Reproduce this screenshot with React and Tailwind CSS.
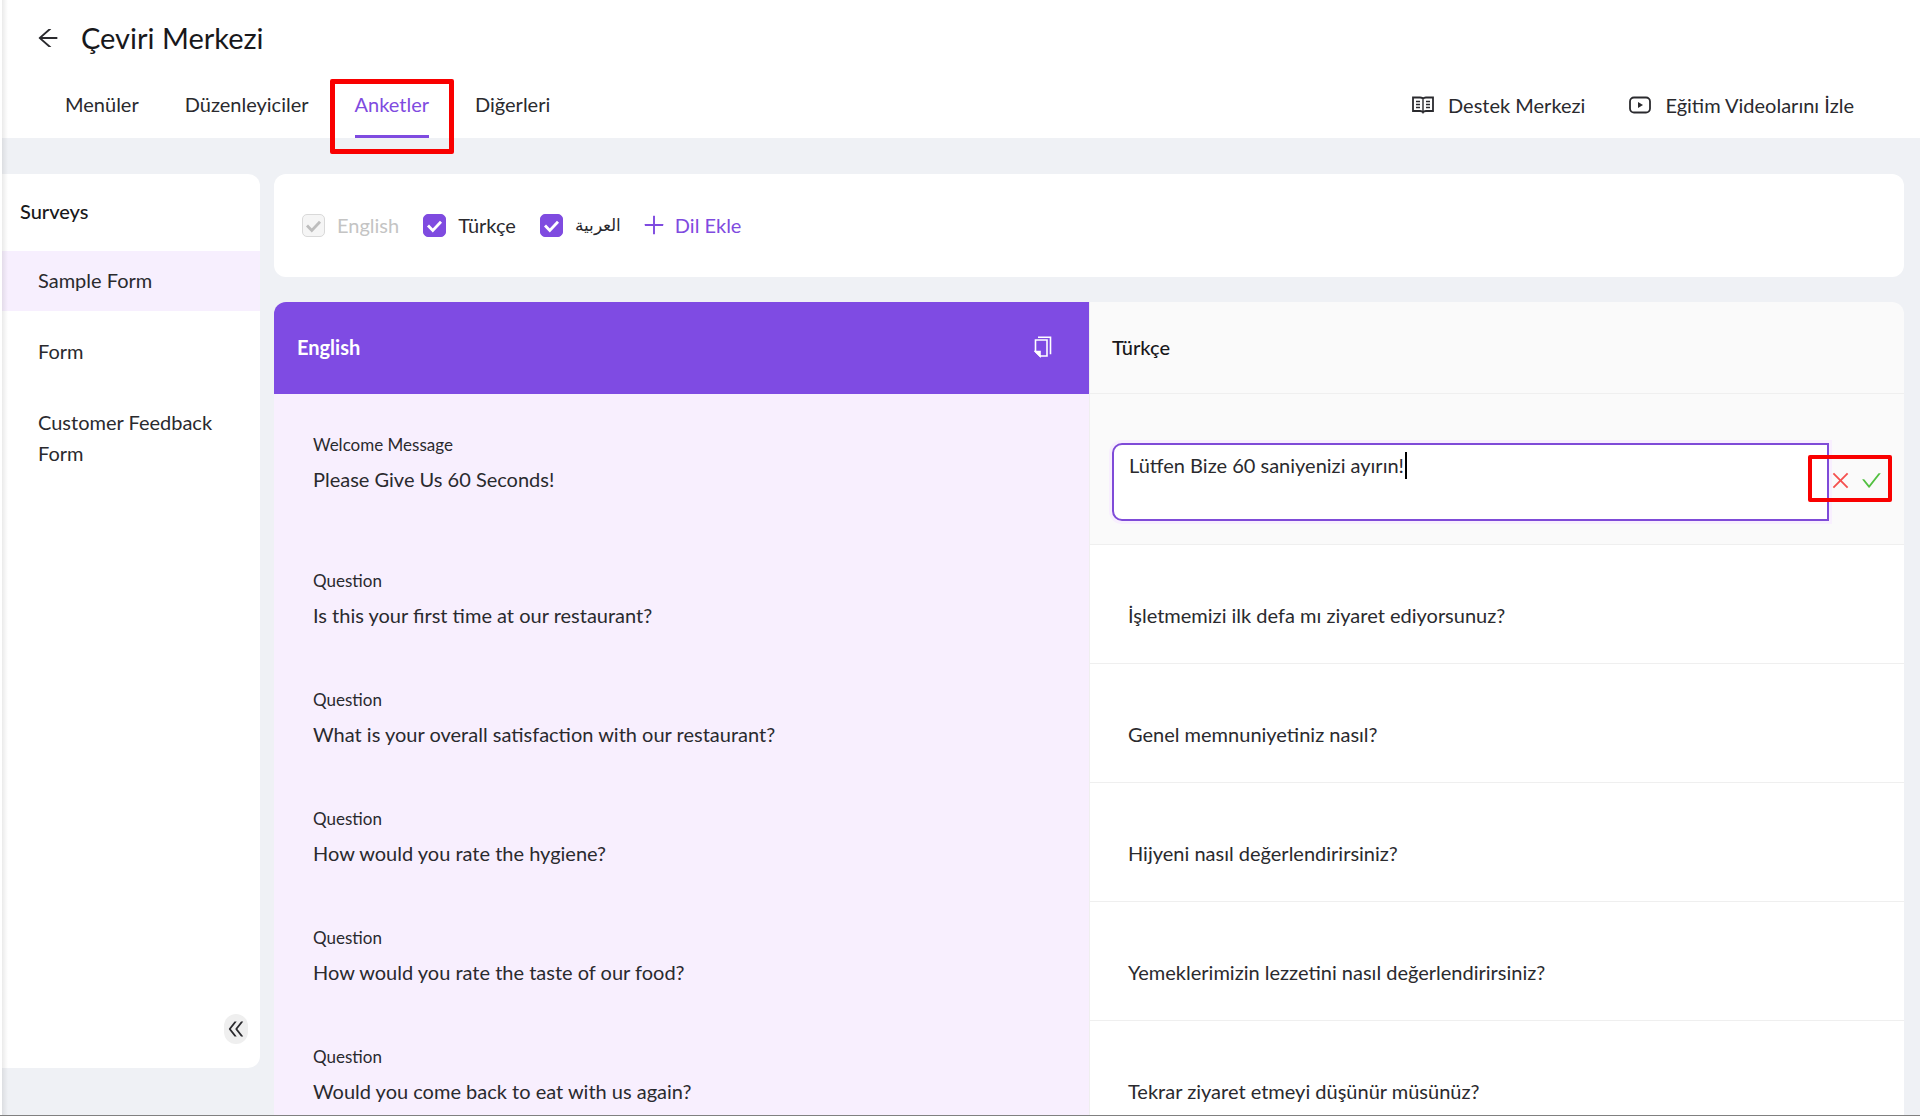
import React, { useState } from 'react';
import {
    AiOutlineArrowLeft,
    AiOutlineCheck,
    AiOutlineClose,
    AiOutlineDoubleLeft,
    AiOutlinePlus
} from 'react-icons/ai';

const TABS = ['Menüler', 'Düzenleyiciler', 'Anketler', 'Diğerleri'];

const SURVEYS = ['Sample Form', 'Form', 'Customer Feedback Form'];

const QUESTIONS = [
    { en: 'Is this your first time at our restaurant?', tr: 'İşletmemizi ilk defa mı ziyaret ediyorsunuz?' },
    { en: 'What is your overall satisfaction with our restaurant?', tr: 'Genel memnuniyetiniz nasıl?' },
    { en: 'How would you rate the hygiene?', tr: 'Hijyeni nasıl değerlendirirsiniz?' },
    { en: 'How would you rate the taste of our food?', tr: 'Yemeklerimizin lezzetini nasıl değerlendirirsiniz?' },
    { en: 'Would you come back to eat with us again?', tr: 'Tekrar ziyaret etmeyi düşünür müsünüz?' }
];

const BookIcon = () => (
    <svg viewBox="0 0 22 18" className="h-[18px] w-[22px]" fill="none" stroke="currentColor" strokeWidth="1.8">
        <path d="M1 1.500h7c1.600 0 3 .700 3 2 0-1.300 1.400-2 3-2h7v13.500h-7c-1.400 0-2.400.300-3 1.300-.600-1-1.600-1.300-3-1.300H1z" />
        <path d="M11 3.500V16M4 5.500h4M4 8.500h4M4 11.500h4M14 5.500h4M14 8.500h4M14 11.500h4" strokeWidth="1.4" />
    </svg>
);

const VideoIcon = () => (
    <svg viewBox="0 0 22 18" className="h-[18px] w-[22px]" fill="none" stroke="currentColor" strokeWidth="1.8">
        <rect x="1" y="1.500" width="20" height="15" rx="4" />
        <path d="M9 6v6l5-3z" fill="currentColor" stroke="none" />
    </svg>
);

const CopyIcon = () => (
    <svg viewBox="0 0 18 22" className="h-[22px] w-[18px]" fill="none" stroke="currentColor" strokeWidth="1.6">
        <path d="M1.500 4h11.500v16H6l-4.500-4.500z" />
        <path d="M1.500 15.500H6V20z" fill="currentColor" />
        <path d="M4 1.300h12.500v17" />
    </svg>
);

const LanguageCheck = ({ label, disabled = false, lang }) => {
    const [checked, setChecked] = useState(true);

    return (
        <label className={`flex items-center gap-3 ${disabled ? 'text-[#c4c4c4]' : 'text-[#2a2a2e]'}`}>
            <span className="relative flex">
                <input
                    type="checkbox"
                    checked={checked}
                    disabled={disabled}
                    onChange={(e) => setChecked(e.target.checked)}
                    className="peer h-[23px] w-[23px] appearance-none rounded-[5px] border border-[#d9d9d9] bg-white checked:border-[#7f4be0] checked:bg-[#7f4be0] disabled:border-[#d9d9d9] disabled:bg-[#f5f5f5]"
                />
                <svg
                    viewBox="0 0 23 23"
                    className="pointer-events-none absolute inset-0 hidden text-white peer-checked:block peer-disabled:text-[#bdbdbd]"
                    fill="none"
                    stroke="currentColor"
                    strokeWidth="2.8"
                >
                    <path d="M5 11.500l4.800 5L18 7.800" />
                </svg>
            </span>
            <span lang={lang} className={lang === 'ar' ? 'text-[17px] leading-7' : ''}>{label}</span>
        </label>
    );
};

const Header = () => (
    <header className="bg-white pt-4 text-[#2a2a2e]">
        <div className="flex h-11 items-center gap-5 pl-[35px]">
            <button aria-label="Geri"><AiOutlineArrowLeft className="h-[26px] w-[26px]" /></button>
            <h1 className="text-[29px] text-[#18181b]">Çeviri Merkezi</h1>
        </div>
        <div className="flex h-[78px] items-stretch justify-between pr-[66px] pl-[65px]">
            <nav className="flex gap-[46px]">
                {TABS.map((tab) => (
                    <a
                        key={tab}
                        href="#"
                        className={`relative flex items-center border-b-3 pt-6 pb-[11px] ${
                            tab === 'Anketler' ? 'border-[#7f4be0] text-[#7f4be0]' : 'border-transparent'
                        }`}
                    >
                        {tab}
                        {tab === 'Anketler' && (
                            <span className="absolute -inset-x-[25px] top-[19px] -bottom-[19px] rounded-xs border-5 border-[#f90000]" />
                        )}
                    </a>
                ))}
            </nav>
            <div className="flex items-center gap-[44px] pt-6 pb-[13px]">
                <a href="#" className="flex items-center gap-[14px]"><BookIcon />Destek Merkezi</a>
                <a href="#" className="flex items-center gap-[14px]"><VideoIcon />Eğitim Videolarını İzle</a>
            </div>
        </div>
    </header>
);

const Sidebar = () => (
    <aside className="flex w-[260px] shrink-0 flex-col rounded-r-xl bg-white">
        <h2 className="pt-[22px] pb-[24px] pl-5 font-medium leading-[31px] text-[#18181b]">Surveys</h2>
        <ul className="flex flex-col gap-[11px]">
            {SURVEYS.map((survey, i) => (
                <li key={survey}>
                    <button className={`w-full pt-[14px] pb-[15px] pr-10 pl-[38px] text-left leading-[31px] ${i === 0 ? 'bg-[#f7effe]' : ''}`}>
                        {survey}
                    </button>
                </li>
            ))}
        </ul>
        <button
            aria-label="Daralt"
            className="mt-auto mr-3 mb-6 flex h-[30px] w-6 items-center justify-center self-end rounded-full bg-[#efefef]"
        >
            <AiOutlineDoubleLeft className="h-[22px] w-[22px] shrink-0" />
        </button>
    </aside>
);

const Source = ({ label, text }) => (
    <>
        <div className="text-[17px] leading-6">{label}</div>
        <div className="mt-[6px] leading-8">{text}</div>
    </>
);

const TranslationTable = () => {
    const [value, setValue] = useState('Lütfen Bize 60 saniyenizi ayırın!');

    return (
        <table className="w-full table-fixed border-separate border-spacing-0 text-left">
            <thead>
                <tr className="h-[92px]">
                    <th className="rounded-tl-xl bg-[#7f4be3] pr-[37px] pb-[2px] pl-[23px] font-bold text-white">
                        <div className="flex items-center justify-between">
                            English
                            <button aria-label="Kopyala"><CopyIcon /></button>
                        </div>
                    </th>
                    <th className="rounded-tr-xl border-b border-l border-[#efefef] bg-[#fafafa] px-[22px] pb-[2px] font-medium text-[#18181b]">
                        Türkçe
                    </th>
                </tr>
            </thead>
            <tbody>
                <tr className="align-top">
                    <td className="bg-[#f8effe] pt-[39px] pb-[50px] pl-[39px]">
                        <Source label="Welcome Message" text="Please Give Us 60 Seconds!" />
                    </td>
                    <td className="border-b border-l border-[#efefef] bg-[#fafafa] pt-[49px] pr-3 pl-[22px]">
                        <div className="flex items-center">
                            <div className="relative flex flex-1">
                                <textarea
                                    aria-label="Türkçe"
                                    value={value}
                                    onChange={(e) => setValue(e.target.value)}
                                    className="h-[78px] w-full resize-none rounded-l-[10px] border-2 border-[#7f4bd8] bg-white px-[15px] py-1 leading-8 shadow-[0_0_0_3px_#f8effe] outline-none"
                                />
                                <span className="absolute top-[9px] left-[293px] h-[27px] w-[2px] bg-black" />
                            </div>
                            <div className="relative mb-1 flex w-[63px] items-center gap-2">
                                <button aria-label="Vazgeç"><AiOutlineClose className="h-[23px] w-[23px] text-[#f5504f]" /></button>
                                <button aria-label="Kaydet"><AiOutlineCheck className="h-[23px] w-[23px] text-[#52c041]" /></button>
                                <span className="pointer-events-none absolute -top-[14px] right-0 -bottom-[10px] -left-[21px] rounded-xs border-4 border-[#f90000]" />
                            </div>
                        </div>
                    </td>
                </tr>
                {QUESTIONS.map(({ en, tr }) => (
                    <tr key={en} className="align-top">
                        <td className="bg-[#f8effe] pt-[24px] pb-[33px] pl-[39px]">
                            <Source label="Question" text={en} />
                        </td>
                        <td className="border-b border-l border-[#efefef] bg-white pt-[54px] pl-[38px] leading-8">{tr}</td>
                    </tr>
                ))}
            </tbody>
        </table>
    );
};

export default function App() {
    return (
        <div className="relative flex h-screen flex-col overflow-hidden bg-[#eff1f5] font-['Lato','Noto_Sans',sans-serif] text-[20px] text-[#2a2a2e]">
            <Header />
            <div className="flex min-h-0 flex-1 gap-[14px] pt-9 pr-4">
                <div className="flex pb-[48px]">
                    <Sidebar />
                </div>
                <main className="flex min-w-0 flex-1 flex-col gap-[25px]">
                    <div className="flex shrink-0 items-center gap-5 rounded-xl bg-white px-7 pt-9 pb-[37px]">
                        <div className="flex items-center gap-6">
                            <LanguageCheck label="English" disabled />
                            <LanguageCheck label="Türkçe" />
                            <LanguageCheck label="العربية" lang="ar" />
                        </div>
                        <button className="flex items-center gap-2 text-[#7f4be0]">
                            <AiOutlinePlus className="h-[26px] w-[26px]" />
                            Dil Ekle
                        </button>
                    </div>
                    <TranslationTable />
                </main>
            </div>
            <div className="pointer-events-none absolute inset-y-0 left-0 w-2 border-l-2 border-white bg-linear-to-r from-black/8 to-transparent" />
            <div className="absolute inset-x-0 bottom-0 h-px bg-[#808080]" />
        </div>
    );
}
